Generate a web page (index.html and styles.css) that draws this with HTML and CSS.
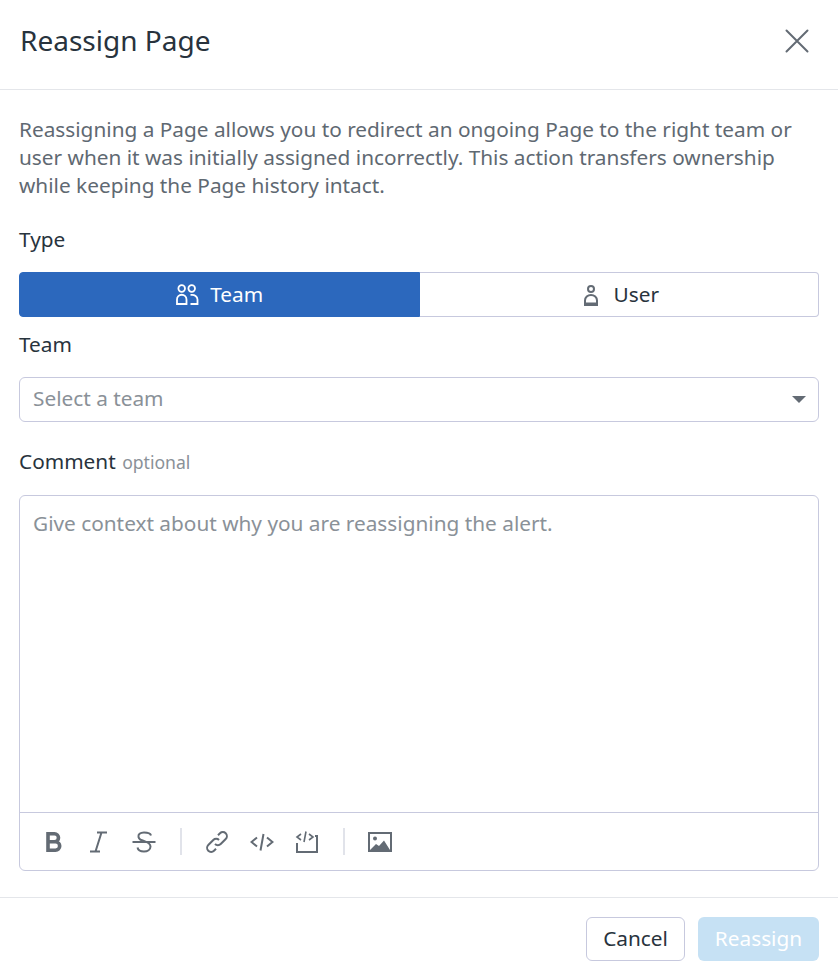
FILE: index.html
```html
<!DOCTYPE html>
<html lang="en">

<head>
  <meta charset="UTF-8" />
  <meta name="viewport" content="width=device-width, initial-scale=1.0" />
  <title>Reassign Page</title>
  <link rel="stylesheet" href="styles.css">
</head>

<body>
  <div class="modal">
    <header class="modal-header">
      <h1>Reassign Page</h1>
      <button class="close" type="button" aria-label="Close">
        <svg width="24" height="24" viewBox="0 0 24 24" fill="none" stroke="#636b74" stroke-width="2" stroke-linecap="round">
          <path d="M1.500 1.500 L22.500 22.500 M22.500 1.500 L1.500 22.500" />
        </svg>
      </button>
    </header>

    <main class="modal-body">
      <p class="intro">Reassigning a Page allows you to redirect an ongoing Page to the right team or user when it was initially assigned incorrectly. This action transfers ownership while keeping the Page history intact.</p>

      <div class="label label-type">Type</div>
      <div class="toggle">
        <button class="toggle-btn active" type="button">
          <svg width="24" height="24" viewBox="0 0 24 24" fill="none" stroke="#fff" stroke-width="1.800">
            <circle cx="6.700" cy="5.500" r="3.300" />
            <circle cx="16.700" cy="5.500" r="3.300" />
            <path d="M2 21 V16.500 a4.750 4.750 0 0 1 9.500 0 V21 Z" />
            <path d="M15.500 11.800 h1 a5.500 5 0 0 1 6 4.700 V21 H15.500" />
          </svg>
          Team
        </button>
        <button class="toggle-btn" type="button">
          <svg width="24" height="24" viewBox="0 0 24 24" fill="none" stroke="#636b74" stroke-width="2">
            <circle cx="12" cy="6" r="3" />
            <path d="M6 22 V17.500 a6 5.500 0 0 1 12 0 V22 Z M6 20.500 H18" />
          </svg>
          User
        </button>
      </div>

      <div class="label label-team">Team</div>
      <div class="select">
        <span>Select a team</span>
        <i class="caret"></i>
      </div>

      <div class="label label-comment">Comment <small>optional</small></div>
      <div class="editor">
        <div class="editor-text">Give context about why you are reassigning the alert.</div>
        <div class="toolbar">
          <svg class="tool" width="24" height="24" viewBox="0 0 24 24" fill="none" stroke="#636b74" stroke-width="3.600">
            <path d="M6 3.800 H12.500 a4 4 0 0 1 0 8 H6 Z M6 11.800 H13.500 a4.200 4.200 0 0 1 0 8.400 H6 Z" />
          </svg>
          <svg class="tool" width="24" height="24" viewBox="0 0 24 24" fill="none" stroke="#636b74" stroke-width="2">
            <path d="M10 2.500 H20 M3 21.500 H13 M14.500 2.500 L8.500 21.500" />
          </svg>
          <svg class="tool" width="24" height="24" viewBox="0 0 24 24" fill="none" stroke="#636b74" stroke-width="2">
            <path d="M19 5.500 C18.500 3.500 15.500 2.500 12 2.500 C8 2.500 6 4.500 6.500 7 C7 9.500 10 10.500 12 11 C15 12 18.500 13 18.500 16.500 C18.500 19.500 15.500 21.500 12 21.500 C8.500 21.500 6 20 5.500 17.500" />
            <path d="M0.500 12 H23.500" />
          </svg>
          <span class="sep"></span>
          <svg class="tool" width="24" height="24" viewBox="0 0 24 24" fill="none" stroke="#636b74" stroke-width="2">
            <path d="M10 14 a4 4 0 0 0 5.700 0 l5 -5 a4 4 0 0 0 -5.700 -5.700 l-2 2" />
            <path d="M14 10 a4 4 0 0 0 -5.700 0 l-5 5 a4 4 0 0 0 5.700 5.700 l2 -2" />
          </svg>
          <svg class="tool" width="24" height="24" viewBox="0 0 24 24" fill="none" stroke="#636b74" stroke-width="2">
            <path d="M7 7.500 L1.500 12 L7 16.500 M17 7.500 L22.500 12 L17 16.500 M13.500 4 L10.500 20.500" />
          </svg>
          <svg class="tool" width="24" height="24" viewBox="0 0 24 24" fill="none" stroke="#636b74" stroke-width="2">
            <path d="M6 4 L2 7 L6 10 M14 4 L18 7 L14 10 M11 1.500 L9 12" stroke-width="1.600" />
            <path d="M20 6 H22 V22 H2 V13" />
          </svg>
          <span class="sep"></span>
          <svg class="tool" width="24" height="24" viewBox="0 0 24 24" fill="none" stroke="#636b74" stroke-width="2">
            <rect x="1" y="3" width="22" height="18" />
            <circle cx="7" cy="8.500" r="2" fill="#636b74" stroke="none" />
            <path d="M2 20 L8 14 L11 16 L16 10.500 L22 20 Z" fill="#636b74" stroke="none" />
          </svg>
        </div>
      </div>
    </main>

    <footer class="modal-footer">
      <button class="btn btn-cancel" type="button">Cancel</button>
      <button class="btn btn-primary" type="button" disabled>Reassign</button>
    </footer>
  </div>
</body>

</html>
```

FILE: styles.css
```css
/* Global Styles */
* {
  box-sizing: border-box;
  margin: 0;
  padding: 0;
  font-family: "Noto Sans", sans-serif;
}

body {
  background: #ffffff;
  color: #28333d;
}

.modal {
  display: flex;
  flex-direction: column;
  width: 838px;
  height: 976px;
}

/* Header */
.modal-header {
  display: flex;
  align-items: center;
  justify-content: space-between;
  height: 90px;
  padding: 0 29px 8px 20px;
  border-bottom: 1px solid #e4e6ea;
}

.modal-header h1 {
  font-size: 28px;
  font-weight: 400;
  line-height: 36px;
  margin-bottom: 2px;
}

.close {
  display: flex;
  background: none;
  border: none;
}

/* Body */
.modal-body {
  flex: 1;
  padding: 25px 19px 0 19px;
}

.intro {
  font-size: 20.800px;
  line-height: 28px;
  color: #5f6972;
}

.label {
  font-size: 20.800px;
  line-height: 28px;
  color: #28333d;
}

.label small {
  font-size: 17.600px;
  color: #8a9198;
  margin-left: 1px;
}

.label-type {
  margin-top: 26px;
  margin-bottom: 19px;
}

.label-team {
  margin-top: 13px;
  margin-bottom: 19px;
}

.label-comment {
  margin-top: 25px;
  margin-bottom: 19px;
}

/* Type toggle */
.toggle {
  display: flex;
  height: 45px;
}

.toggle-btn {
  flex: 1;
  display: flex;
  align-items: center;
  justify-content: center;
  gap: 11px;
  padding-bottom: 2px;
  font-size: 20.800px;
  color: #28333d;
  background: #ffffff;
  border: 1px solid #c7c9de;
  border-left: none;
  border-radius: 0 4px 4px 0;
}

.toggle-btn svg {
  margin-top: 2px;
}

.toggle-btn.active {
  color: #ffffff;
  background: #2c68bd;
  border: 1px solid #2c68bd;
  border-radius: 4px 0 0 4px;
}

/* Select */
.select {
  display: flex;
  align-items: center;
  justify-content: space-between;
  height: 45px;
  padding: 0 12px 4px 13px;
  font-size: 20.800px;
  color: #8a9198;
  border: 1px solid #c7c9de;
  border-radius: 6px;
}

.caret {
  width: 0;
  height: 0;
  margin-top: 4px;
  border-left: 7px solid transparent;
  border-right: 7px solid transparent;
  border-top: 7px solid #636b74;
}

/* Comment editor */
.editor {
  display: flex;
  flex-direction: column;
  height: 376px;
  border: 1px solid #c7c9de;
  border-radius: 6px;
}

.editor-text {
  flex: 1;
  padding: 13px 13px;
  font-size: 20.800px;
  line-height: 28px;
  color: #8a9198;
}

.toolbar {
  display: flex;
  align-items: center;
  gap: 21px;
  height: 58px;
  padding: 0 22px;
  border-top: 1px solid #c7c9de;
}

.tool {
  flex: none;
}

.sep {
  width: 2px;
  height: 27px;
  margin: 0 2px 0 3px;
  background: #e1e3ea;
}

/* Footer */
.modal-footer {
  display: flex;
  justify-content: flex-end;
  gap: 13px;
  height: 79px;
  padding: 19px 19px 0 0;
  border-top: 1px solid #e4e6ea;
}

.btn {
  height: 44px;
  padding-bottom: 2px;
  font-size: 20.800px;
  border-radius: 6px;
}

.btn-cancel {
  width: 99px;
  color: #28333d;
  background: #ffffff;
  border: 1px solid #c7c9de;
}

.btn-primary {
  width: 121px;
  color: #ffffff;
  background: #c6e1f4;
  border: none;
}
```
